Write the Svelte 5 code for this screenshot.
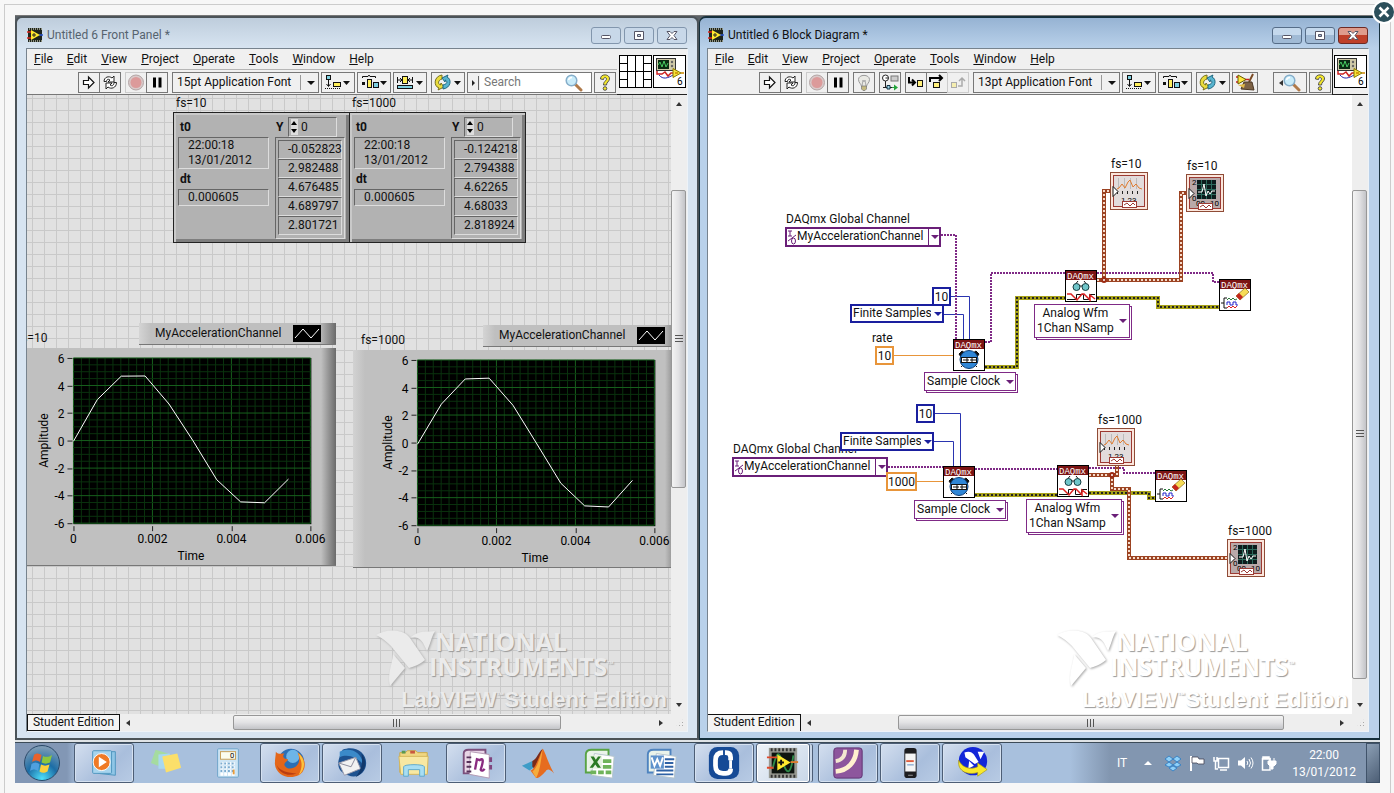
<script lang="ts">
    const menu = ['File', 'Edit', 'View', 'Project', 'Operate', 'Tools', 'Window', 'Help']

    const clusters = [
        { x: 146, label: 'fs=10', values: ['-0.052823', '2.982488', '4.676485', '4.689797', '2.801721'] },
        { x: 322, label: 'fs=1000', values: ['-0.124218', '2.794388', '4.62265', '4.68033', '2.818924'] }
    ]

    const charts = [
        { x: -18, y: 228, label: 'fs=10', samples: [-0.05, 2.98, 4.68, 4.69, 2.65, 0, -2.85, -4.45, -4.52, -2.8] },
        { x: 326, y: 230, label: 'fs=1000', samples: [-0.12, 2.79, 4.62, 4.68, 2.7, -0.1, -2.95, -4.6, -4.68, -2.75] }
    ]

    const plot = { x: 64, y: 36, w: 238, h: 166 }

    function px(i: number) {
        return plot.x + (i * 0.000605 / 0.006) * plot.w
    }
    function py(v: number) {
        return plot.y + ((6 - v) / 12) * plot.h
    }
    function trace(samples: number[]) {
        return samples.map((v, i) => px(i).toFixed(1) + ',' + py(v).toFixed(1)).join(' ')
    }
    function range(n: number) {
        return Array.from({ length: n }, (_, i) => i)
    }

    // block diagram, coordinates on the diagram canvas
    const notes = [
        { x: 78, y: 117, text: 'DAQmx Global Channel' },
        { x: 164, y: 236, text: 'rate' },
        { x: 403, y: 62, text: 'fs=10' },
        { x: 479, y: 64, text: 'fs=10' },
        { x: 25, y: 347, text: 'DAQmx Global Channel' },
        { x: 390, y: 318, text: 'fs=1000' },
        { x: 520, y: 429, text: 'fs=1000' }
    ]
    const channels = [{ x: 77, y: 132 }, { x: 24, y: 362 }]
    const rings = [{ x: 142, y: 209 }, { x: 132, y: 337 }]
    const constants = [
        { x: 224, y: 192, w: 19, value: '10', kind: 'int', name: 'samples per channel' },
        { x: 167, y: 251, w: 19, value: '10', kind: 'dbl', name: 'rate' },
        { x: 208, y: 309, w: 19, value: '10', kind: 'int', name: 'samples per channel' },
        { x: 178, y: 377, w: 31, value: '1000', kind: 'dbl', name: 'rate' }
    ]
    const nodes = [
        { x: 245, y: 244, kind: 'clock' },
        { x: 357, y: 175, kind: 'read' },
        { x: 511, y: 184, kind: 'clear' },
        { x: 235, y: 371, kind: 'clock' },
        { x: 349, y: 370, kind: 'read' },
        { x: 447, y: 375, kind: 'clear' }
    ]
    const selectors = [
        { x: 216, y: 277, lines: ['Sample Clock'] },
        { x: 326, y: 209, lines: ['Analog Wfm', '1Chan NSamp'] },
        { x: 206, y: 405, lines: ['Sample Clock'] },
        { x: 318, y: 404, lines: ['Analog Wfm', '1Chan NSamp'] }
    ]
    const terminals = [
        { x: 402, y: 77, kind: 'wave' },
        { x: 478, y: 79, kind: 'graph' },
        { x: 389, y: 333, kind: 'wave' },
        { x: 519, y: 444, kind: 'graph' }
    ]
    const wires = [
        { kind: 'int', d: 'M243 201.5H261.5V244M236 219.5H255.5V244M227 318.5H252.5V371M226 346.5H245.5V371' },
        { kind: 'dbl', d: 'M186 260.5H245M209 386.5H235' },
        { kind: 'task', d: 'M233 140H248V244M277 247H283V178H357M389 178H505V187H511M180 372H235M267 374H349M381 373H416V378H447' },
        { kind: 'error', d: 'M277 272H309V203H357M389 203H450V212H511M267 400H349M381 398H441V403H447' },
        { kind: 'wave', d: 'M389 185H473V98H478M396 185V96H402M381 380H409V371M404 380V394H421V463H519' }
    ]

    const pinned = [
        { icon: 'media', name: 'Windows Media Player', open: true },
        { icon: 'notes', name: 'Sticky Notes' },
        { icon: 'calc', name: 'Calculator' },
        { icon: 'firefox', name: 'Firefox', open: true },
        { icon: 'thunderbird', name: 'Thunderbird', open: true },
        { icon: 'explorer', name: 'Explorer' },
        { icon: 'onenote', name: 'OneNote', open: true },
        { icon: 'matlab', name: 'MATLAB' },
        { icon: 'excel', name: 'Excel' },
        { icon: 'word', name: 'Word' },
        { icon: 'ccleaner', name: 'C', open: true },
        { icon: 'labview', name: 'LabVIEW', open: true, stacked: true },
        { icon: 'waves', name: 'Connect', open: true },
        { icon: 'phone', name: 'Phone', open: true },
        { icon: 'nimax', name: 'Measurement & Automation', open: true }
    ]
</script>

{#snippet tool(name)}
    <svg class="glyph" class:wide={['align', 'distribute', 'resize', 'reorder'].includes(name)} viewBox={['align', 'distribute', 'resize', 'reorder'].includes(name) ? '0 0 30 19' : '0 0 20 19'}>
        {#if name === 'run'}
            <path d="M4.5 7.5H9.5V4L15 9.500L9.500 15V11.500H4.500Z" fill="#fff" stroke="#111" stroke-width="1.200" />
        {:else if name === 'loop'}
            <path d="M4 8.500C4 4 9 2.500 12 5L14 3V9H8L10 7C8 5.500 6.500 6.500 6.500 8.500ZM16.500 9.500C16.500 15 11 16.500 8 14L6 16V10H12L10 12C12 13.500 14 12.500 14 9.500Z" fill="#fff" stroke="#222" />
        {:else if name === 'stop'}
            <circle cx="10" cy="9.500" r="7.500" fill="#d9c9c9" stroke="#b3a5a5" />
            <circle cx="10" cy="9.500" r="5.500" fill="#dc9a9a" />
        {:else if name === 'pause'}
            <path d="M6 4.500H9V14.500H6ZM11.500 4.500H14.500V14.500H11.500Z" fill="#000" />
        {:else if name === 'bulb'}
            <path d="M7.500 13.500C7.500 11 4.500 10 4.500 6.500C4.500 1 15.500 1 15.500 6.500C15.500 10 12.500 11 12.500 13.500Z" fill="#e9e9e4" stroke="#999" />
            <path d="M8 13L9 7L10 9L11 7L12 13" fill="none" stroke="#aaa" />
            <path d="M7.500 13H12.500V16L11 17.500H9L7.500 16Z" fill="#c5ba80" stroke="#777" stroke-width=".7" />
        {:else if name === 'retain'}
            <circle cx="5.500" cy="5" r="3" fill="#fff" stroke="#222" />
            <path d="M5.500 8V14M5.500 5H8M3 14.500H7M9 14.500H14" stroke="#222" fill="none" />
            <rect x="11" y="3" width="7" height="5" fill="#ccc" stroke="#777" />
            <path d="M7 12.500H10V16H7Z" fill="#9ed4e8" stroke="#134" />
            <path d="M12 14H14V11.500L18 14.500L14 17.500V15H12Z" fill="#22a33a" />
        {:else if name === 'into'}
            <path d="M3 4V9.500H9M6 6.500L9 9.500L6 12.500" fill="none" stroke="#000" stroke-width="2" />
            <rect x="11.500" y="7.500" width="5" height="6" fill="#ffef7a" stroke="#111" />
        {:else if name === 'over'}
            <path d="M3 9V5H14M12 2L15 5L12 8" fill="none" stroke="#000" stroke-width="2" />
            <rect x="6.500" y="9.500" width="6" height="5" fill="#ffef7a" stroke="#111" />
        {:else if name === 'out'}
            <rect x="3.500" y="9.500" width="5" height="5" fill="#f5eeb0" stroke="#aaa" />
            <path d="M10 13H14V6M11 8L14 5L17 8" fill="none" stroke="#aaa" stroke-width="1.500" />
        {:else if name === 'align'}
            <rect x="3.500" y="2.500" width="4" height="4" fill="#7fd0e0" stroke="#111" />
            <path d="M5.500 7V13M3.500 11L5.500 13.500L7.500 11" fill="none" stroke="#111" />
            <path d="M2 15.500H18" stroke="#111" stroke-dasharray="1 1" />
            <rect x="10.500" y="9.500" width="7" height="4" fill="#ffef5a" stroke="#111" />
            <path d="M20 8H27L23.500 12Z" fill="#111" />
        {:else if name === 'distribute'}
            <path d="M3.500 5V3.500H9L10 2L11 3.500H16.500V5" fill="none" stroke="#111" />
            <path d="M3 9H6V12H3Z" fill="#111" />
            <rect x="8.500" y="6.500" width="4" height="8" fill="#ffef5a" stroke="#111" />
            <rect x="14.500" y="9.500" width="5" height="5" fill="#7fd0e0" stroke="#111" />
            <path d="M21 8H28L24.500 12Z" fill="#111" />
        {:else if name === 'resize'}
            <rect x="7.500" y="3.500" width="5" height="7" fill="#ffef5a" stroke="#111" />
            <path d="M2 7H7M13 7H18M5 5L7 7L5 9M15 5L13 7L15 9M2.500 4V10M17.500 4V10" fill="none" stroke="#111" />
            <rect x="2.500" y="12.500" width="15" height="3" fill="#7fd0e0" stroke="#111" />
            <path d="M21 8H28L24.500 12Z" fill="#111" />
        {:else if name === 'reorder'}
            <path d="M9 2C1 3 0 13 6 15L5 17L11 14L8 10L7.500 12C4.500 11 5 7 9 6Z" fill="#e9dc3c" stroke="#77701c" />
            <path d="M10 16C18 15 19 6 14 4L15 2L9 5L12 9L12.500 7C15 9 14 11 10 12Z" fill="#58b5d0" stroke="#1e6780" />
            <path d="M21 8H28L24.500 12Z" fill="#111" />
        {:else if name === 'clean'}
            <path d="M1 4H4M1 9H4M10 6.500H14" stroke="#c22" stroke-width="1.500" />
            <path d="M3 2L11 6.500L3 11Z" fill="#ffe83c" stroke="#665a00" />
            <path d="M18 1L14 9" stroke="#7a4a24" stroke-width="2" />
            <path d="M9 9L17 9L19 17L6 16Z" fill="#7d6245" stroke="#4c3826" />
            <path d="M3 12L10 11L9 15Z" fill="#e3ba48" />
        {:else if name === 'help'}
            <path d="M5.500 6C5.500 0 15 1 14.500 6C14 9 11.500 9 11.500 12H8.500C8.500 8 11.500 8 11.500 6C11.500 4 8.500 4 8.500 6.500Z" fill="#f5e82a" stroke="#444" stroke-width=".9" />
            <circle cx="10" cy="15.500" r="1.800" fill="#f5e82a" stroke="#444" stroke-width=".9" />
        {/if}
    </svg>
{/snippet}

{#snippet lens()}
    <svg class="lens" viewBox="0 0 18 18">
        <path d="M10 10L16 16" stroke="#b07a4a" stroke-width="3" stroke-linecap="round" />
        <circle cx="6.500" cy="6.500" r="5.300" fill="#c9ecfa" stroke="#86aeca" stroke-width="1.500" />
        <path d="M3.500 6C4 4 5 3.500 7 3.500" stroke="#fff" stroke-width="1.500" fill="none" />
    </svg>
{/snippet}

{#snippet group(names, labels, faint = '')}
    <div class="group">
        {#each names as name, i}
            <button class="tool" class:faint={faint === name} aria-label={labels[i]}>{@render tool(name)}</button>
        {/each}
    </div>
{/snippet}

{#snippet viIcon()}
    <svg class="vi-icon" viewBox="0 0 33 33">
        <rect x=".5" y=".5" width="32" height="32" fill="#fff" stroke="#000" />
        <rect x="3.500" y="3.500" width="19" height="12" fill="#cfc9a8" stroke="#333" />
        <rect x="5" y="5" width="11" height="9" fill="#0a2a12" />
        <path d="M5 10L7 7L9 12L11 6L13 12L15 8" stroke="#46c860" fill="none" />
        <circle cx="19" cy="7" r="1.200" fill="#666" />
        <circle cx="19" cy="11" r="1.200" fill="#666" />
        <path d="M4 16V19H9L12 17L15 21L18 18H20" fill="none" stroke="#c22" stroke-width="1.500" />
        <path d="M6 20C10 25 15 23 20 20" fill="none" stroke="#22a" />
        <path d="M20 13.500L28 18L20 22.500Z" fill="#f4e23a" stroke="#8a7a00" />
        <path d="M22 18H25M28 18H31" stroke="#c80" stroke-width="1.500" />
        <text x="24" y="30">6</text>
    </svg>
{/snippet}

{#snippet appIcon()}
    <svg class="app-icon" viewBox="0 0 16 16">
        <path d="M1 1H15V15H1Z" fill="#1d241d" />
        <path d="M2 2H15M2 14H15" stroke="#b5b5a0" stroke-width="1.500" stroke-dasharray="1 1" />
        <path d="M0 5H5M0 11H5" stroke="#d8261c" stroke-width="1.500" />
        <path d="M12 8H16" stroke="#2750d0" stroke-width="1.500" />
        <path d="M4 3L13 8L4 13Z" fill="#ffe92e" />
        <path d="M5 8H9M7 6V10" stroke="#222" />
    </svg>
{/snippet}

{#snippet titlebar(title)}
    <div class="titlebar">
        {@render appIcon()}
        <h1>{title}</h1>
        <button class="caption" aria-label="Minimize"><svg viewBox="0 0 12 12"><rect x="1.500" y="6.500" width="9" height="3" rx="1" fill="#fff" stroke="#556" /></svg></button>
        <button class="caption" aria-label="Restore"><svg viewBox="0 0 12 12"><path d="M1.500 2.500H10.500V10.500H1.500ZM4.500 5.500V7.500H7.500V5.500Z" fill="#fff" fill-rule="evenodd" stroke="#556" /></svg></button>
        <button class="caption close" aria-label="Close"><svg viewBox="0 0 12 12"><path d="M1 2.500H4L6 4.500L8 2.500H11L8 6.500L11 10.500H8L6 8.500L4 10.500H1L4 6.500Z" fill="#fff" stroke="#556" /></svg></button>
    </div>
{/snippet}

{#snippet menubar()}
    <nav class="menubar">
        {#each menu as item}
            <button><u>{item[0]}</u>{item.slice(1)}</button>
        {/each}
    </nav>
{/snippet}

{#snippet watermark()}
    <div class="watermark">
        <svg viewBox="0 0 62 60">
            <path d="M1 6C10 0 28 -1 35 9L50 31C44 36 38 38 34 39L20 22C15 15 9 10 1 6Z" />
            <path d="M18 25L30 39L15 57C12 45 17 37 18 25Z" />
            <path d="M36 8C44 1 52 3 60 2C56 9 55 16 52 22C48 14 47 8 36 8Z" />
        </svg>
        <p class="ni national">NATIONAL</p>
        <p class="ni">INSTRUMENTS<sup>™</sup></p>
        <p class="edition">LabVIEW<sup>™</sup>Student Edition</p>
    </div>
{/snippet}

{#snippet vscroll(start, size)}
    <div class="vscroll">
        <span class="arrow up"></span>
        <div class="track"><div class="thumb" style="top: {start}%; height: {size}%"><i></i></div></div>
        <span class="arrow down"></span>
    </div>
{/snippet}

{#snippet status(start, size)}
    <div class="status">
        <span class="edition-tag">Student Edition</span>
        <span class="arrow left"></span>
        <div class="track"><div class="thumb" style="left: {start}%; width: {size}%"><i></i></div></div>
        <span class="arrow right"></span>
        <span class="grip"></span>
    </div>
{/snippet}

{#snippet daqmx(kind)}
    <svg viewBox="0 0 32 32">
        <rect x=".5" y=".5" width="31" height="31" fill="#fff" stroke="#000" />
        <rect x="1" y="1" width="30" height="9" fill="#7c1414" />
        <text x="2" y="9">DAQmx</text>
        {#if kind === 'clock'}
            <path d="M6 15L9 12L12 14L8 18ZM26 15L23 12L20 14L24 18ZM8 28L10 26M24 28L22 26" fill="#111" stroke="#111" />
            <circle cx="16" cy="20.500" r="9" fill="#2f86d6" stroke="#0b3c74" />
            <rect x="8.500" y="18.500" width="15" height="5" fill="#fff" stroke="#111" />
            <path d="M11 20V22M13 20H15V22H13ZM18 20H20V22H18ZM22 20V22" stroke="#111" fill="none" />
        {:else if kind === 'read'}
            <path d="M9 16L13 11M23 16L19 11M15 16H17" stroke="#111" fill="none" />
            <circle cx="11.500" cy="17" r="3.500" fill="#6fc5c9" stroke="#153c40" />
            <circle cx="20.500" cy="17" r="3.500" fill="#6fc5c9" stroke="#153c40" />
            <path d="M2 29.500H11.500V24.500H18.500V29.500H24.500V24.500H30" stroke="#111" fill="none" />
            <path d="M2 24H6L12 30L17 24H19L25 30V25L30 29" stroke="#d22" stroke-width="1.500" fill="none" />
        {:else}
            <path d="M17 17L26 9L30 13L21 21Z" fill="#f6dc56" stroke="#8b6b1a" stroke-width=".7" />
            <path d="M17 17L20 14L24 18L21 21Z" fill="#c4261e" />
            <path d="M2 24H5M8 19H5V29H8" stroke="#111" fill="none" />
            <path d="M8 21L10 19L12 21L14 19L16 21L18 20" stroke="#2a7a3a" fill="none" />
            <path d="M8 26V23H11V26H14V23H17V26H19" stroke="#22c" fill="none" />
            <path d="M8 29L10 27L12 29L14 27L16 29L18 27" stroke="#d22" fill="none" />
        {/if}
    </svg>
{/snippet}

{#snippet terminal(kind)}
    <svg viewBox="0 0 38 38">
        <rect x=".5" y=".5" width="37" height="37" fill="#fbe6dc" stroke="#8f4b36" />
        <rect x="3.500" y="3.500" width="31" height="31" fill={kind === 'wave' ? '#e2dcdc' : '#b9a9a9'} stroke="#9c3a33" />
        {#if kind === 'wave'}
            <path d="M8.500 6V17M14.500 6V17M20.500 6V17M26.500 6V17" stroke="#bbb" />
            <path d="M7 17L9 16L12 12L15 16L18 10L20 8L23 15L26 12L29 16L32 17" stroke="#e07b2e" fill="none" />
            <path d="M7 20.500H32" stroke="#222" stroke-width="3" stroke-dasharray="1 4" />
            <text x="11" y="31">1.23</text>
        {:else}
            <rect x="11" y="6" width="19" height="19" fill="#0c1c1c" />
            <path d="M15.500 6V25M20.500 6V25M25.500 6V25M11 10.500H30M11 15.500H30M11 20.500H30" stroke="#2c6a5c" />
            <path d="M12 18H16L18 10L20 22L22 17L24 20L26 17H29" stroke="#fff" fill="none" />
            <text x="6" y="11">2</text>
            <text x="6" y="27">0</text>
            <text x="10" y="32">00</text>
            <text x="24" y="32">10</text>
        {/if}
        <rect x="12.500" y="29.500" width="14" height="6" fill="#fff" stroke="#9c3a33" />
        <path d="M14 33L17 31L20 34L23 31L25 33" stroke="#9c3a33" fill="none" />
        <path d="M3 14.500L8 19.500L3 24.500Z" fill="#fff" stroke="#111" />
    </svg>
{/snippet}

{#snippet program(name)}
    <svg class="program" viewBox="0 0 36 36">
        {#if name === 'media'}
            <path d="M12 6H30V31L12 29Z" fill="#8fc6e6" stroke="#4c94bd" />
            <rect x="6" y="5" width="20" height="24" rx="1" fill="#a6d4ee" stroke="#4c94bd" />
            <circle cx="15.500" cy="17" r="9" fill="#ef7a25" stroke="#fff" />
            <path d="M12.500 11.500L21 17L12.500 22.500Z" fill="#fff" />
        {:else if name === 'notes'}
            <path d="M7 4L20 8L15 23L2 18Z" fill="#a5dba0" />
            <path d="M10 9L22 8L24 24L10 24Z" fill="#a8d8f0" />
            <path d="M14 11L30 8L34 23L18 28Z" fill="#fbdf6a" />
        {:else if name === 'calc'}
            <rect x="7" y="3" width="22" height="30" rx="1" fill="#cde5f5" stroke="#6ba1c8" />
            <rect x="10" y="6" width="16" height="8" fill="#fbfdf0" stroke="#c79c50" />
            <text x="20" y="13">0</text>
            <path d="M10 18.500H26M10 22.500H26M10 26.500H26M10 30H26" stroke="#fff" stroke-width="3" stroke-dasharray="3 1" />
            <path d="M10 18.500H26M10 22.500H26M10 26.500H26" stroke="#7cacd0" stroke-width="2" stroke-dasharray="2 2" />
            <path d="M24 25V30" stroke="#e79b3a" stroke-width="2" />
        {:else if name === 'firefox'}
            <circle cx="19" cy="17" r="14" fill="#2c6fb5" />
            <circle cx="21" cy="11" r="7" fill="#6db5e8" />
            <path d="M3 6C5 9 9 8 12 8C9 12 12 14 16 14C15 17 12 17 12 20C14 25 21 25 25 21C29 17 28 11 26 7C36 13 36 26 27 31C17 36 3 31 2 19C2 13 3 10 3 6Z" fill="#e4661a" />
            <path d="M26 7C35 13 35 25 27 31C32 22 30 16 29 14C28 12 28 9 26 7Z" fill="#fbc23c" />
            <path d="M4 20C6 28 15 33 25 29C17 28 7 27 4 20Z" fill="#b83d12" />
        {:else if name === 'thunderbird'}
            <path d="M8 4C20 -1 33 6 33 18C33 29 23 35 14 31C5 28 1 22 5 11Z" fill="#1d5290" />
            <path d="M5 6C15 1 28 5 30 20C24 12 13 8 5 12Z" fill="#3b8ac9" />
            <path d="M4 18L22 12L27 24L10 31Z" fill="#f2f2f2" stroke="#99a" />
            <path d="M4 18L17 22L22 12" fill="none" stroke="#889" />
            <path d="M28 8C35 16 33 27 22 33C30 22 29 15 28 8Z" fill="#12396c" />
        {:else if name === 'explorer'}
            <path d="M3 7H9L11 5H20L22 7H32V28H3Z" fill="#f0d782" stroke="#c9a848" />
            <path d="M5 5H9V8H5Z" fill="#5b9a50" />
            <path d="M14 5H19V8H14Z" fill="#c9583f" />
            <path d="M2 11H33L32 30H4Z" fill="#f8e8a2" stroke="#d4b65a" />
            <path d="M7 32V22C7 19 29 19 29 22V32H24V25H12V32Z" fill="#a8def2" stroke="#5ba8cc" />
        {:else if name === 'onenote'}
            <path d="M5 8Q5 4 10 4H28V29H5Z" fill="#e8d5e6" stroke="#7b4f7c" stroke-width="2" />
            <path d="M12 6L32 9V34L11 30Z" fill="#fff" stroke="#b49ab4" />
            <path d="M8 12H13M8 17H13M8 22H13M8 27H13" stroke="#56305a" stroke-width="2" />
            <path d="M17 25L19 14L22 15C26 12 26 16 23 25C24 27 26 26 27 24" stroke="#8a2b80" stroke-width="2.500" fill="none" />
            <path d="M32 12H35V17H32ZM32 20H35V25H32Z" fill="#80457e" />
        {:else if name === 'matlab'}
            <path d="M1 21L12 16L17 20L9 26Z" fill="#3e9cc7" />
            <path d="M12 16C17 14 18 7 23 3L17 26L12 22Z" fill="#7a2b1a" />
            <path d="M23 3C26 7 29 19 35 29C30 24 28 24 26 27C23 30 20 34 16 34L10 26C15 25 19 11 23 3Z" fill="#e66c1f" />
            <path d="M23 3C21 16 20 27 16 34L12 27C17 24 20 12 23 3Z" fill="#f5ac3c" />
        {:else if name === 'excel' || name === 'word'}
            <path d="M3 9Q3 4 9 4H27V28H3Z" fill="#eaf3ea" stroke={name === 'excel' ? '#58a344' : '#4e83bf'} stroke-width="2" />
            <path d="M12 8L33 11L31 34L9 31Z" fill="#fff" stroke="#b5c5cc" />
            {#if name === 'excel'}
                <path d="M6 10H20V24H6Z" fill="#e5f2e0" />
                <path d="M8 11H11.500L13.500 14.500L16 11H19L15 17L19 23H15.500L13 19.500L10.500 23H7L11.500 17Z" fill="#2b7a25" />
                <path d="M21 14H30V18H21ZM21 20H30V24H21ZM8 26H14V30H8ZM16 26H22V30H16ZM24 26H30V30H24Z" fill="#6fb35a" />
            {:else}
                <path d="M6 10H20V24H6Z" fill="#5e92cc" />
                <path d="M7 12L10 21L13 14L16 21L19 12" stroke="#fff" stroke-width="2" fill="none" />
                <path d="M21 14H31M21 18H30M21 22H30M12 26H30M12 30H30" stroke="#2f62a5" stroke-width="2" />
            {/if}
        {:else if name === 'ccleaner'}
            <rect x="2" y="1" width="32" height="34" rx="9" fill="#164a96" />
            <path d="M25 24V25Q25 29 20 29H17Q9 29 9 21V15Q9 7 17 7H20Q25 7 25 12V15" fill="none" stroke="#fff" stroke-width="5" />
            <path d="M18 4V11" stroke="#164a96" stroke-width="2" />
            <path d="M25 15V24" stroke="#fff" stroke-width="3" />
        {:else if name === 'labview'}
            <rect x="3" y="2" width="30" height="32" fill="#989a92" />
            <path d="M5 4H32M5 32H32" stroke="#333" stroke-width="3" stroke-dasharray="2 2" />
            <rect x="6" y="7" width="24" height="22" fill="#0d140f" />
            <path d="M7 24C12 3 14 6 18 18S26 32 29 10" stroke="#2f8b4a" stroke-width="2" fill="none" />
            <path d="M1 12H12M1 23H8" stroke="#e0492c" stroke-width="2" />
            <path d="M26 17H34" stroke="#dd7b2e" stroke-width="2" />
            <path d="M12 9L26 17.500L12 26Z" fill="#ffe92e" />
            <path d="M13 17.500H19M16 14.500V20.500" stroke="#111" stroke-width="2" />
        {:else if name === 'waves'}
            <rect x="3" y="2" width="30" height="32" rx="3" fill="#8d569d" stroke="#5e3170" />
            <path d="M5 16C12 15 15 11 15 4" stroke="#f3e7d0" stroke-width="4" fill="none" />
            <path d="M5 27C18 26 26 17 27 4" stroke="#fff1cf" stroke-width="5" fill="none" />
        {:else if name === 'phone'}
            <rect x="12" y="2" width="13" height="32" rx="3" fill="#1d1d20" />
            <rect x="13" y="8" width="11" height="19" fill="#f5f5f5" />
            <path d="M14 16H22" stroke="#e05c3c" stroke-width="2" />
            <path d="M15 20H22" stroke="#5a8bc0" />
            <path d="M16 31H21" stroke="#999" />
        {:else}
            <circle cx="19" cy="16" r="15" fill="#1326d8" />
            <path d="M10 7C14 5 18 6 20 9L25 17L21 19L11 12ZM24 6L31 6L27 14ZM15 16L20 21L14 24Z" fill="#fff" />
            <path d="M4 15C2 28 15 31 24 28V32L34 25L24 18V22C15 26 7 22 4 15Z" fill="#f9e92c" stroke="#a89a10" stroke-width=".7" />
        {/if}
    </svg>
{/snippet}

<div class="page">
    <div class="viewer">
        <div class="desktop">
            <div class="windows">
                <section class="window inactive">
                    {@render titlebar('Untitled 6 Front Panel *')}
                    <div class="client">
                        <header>
                            <div class="bars">
                                {@render menubar()}
                                <div class="toolbar">
                                    {@render group(['run', 'loop'], ['Run', 'Run continuously'])}
                                    {@render group(['stop', 'pause'], ['Abort', 'Pause'], 'stop')}
                                    <div class="group font"><select aria-label="Font"><option>15pt Application Font</option></select><span class="caret"></span></div>
                                    <button class="tool" aria-label="Align objects">{@render tool('align')}</button>
                                    <button class="tool" aria-label="Distribute objects">{@render tool('distribute')}</button>
                                    <button class="tool" aria-label="Resize objects">{@render tool('resize')}</button>
                                    {@render group(['reorder'], ['Reorder'])}
                                    <label class="search">
                                        <span class="handle"></span>
                                        <input type="text" placeholder="Search" aria-label="Search" />
                                        {@render lens()}
                                    </label>
                                    <button class="tool" aria-label="Context help">{@render tool('help')}</button>
                                </div>
                            </div>
                            <div class="icons">
                                <svg class="vi-icon" viewBox="0 0 33 33">
                                    <rect x=".5" y=".5" width="32" height="32" fill="#fff" stroke="#000" />
                                    <path d="M8.500 0V33M16.500 0V33M24.500 0V33M8 16.500H25M0 8.500H8M0 16.500H8M0 24.500H8M25 8.500H33M25 16.500H33M25 24.500H33" stroke="#000" />
                                </svg>
                                {@render viIcon()}
                            </div>
                        </header>
                        <div class="body">
                            <div class="canvas panel">
                                {#each clusters as cluster}
                                    <div class="cluster" style="left: {cluster.x}px">
                                        <p>{cluster.label}</p>
                                        <div class="frame">
                                            <div class="stamp">
                                                <b>t0</b>
                                                <output>22:00:18<br />13/01/2012</output>
                                                <b>dt</b>
                                                <output>0.000605</output>
                                            </div>
                                            <div class="samples">
                                                <label><b>Y</b><span class="index"><i class="spin"></i><input value="0" /></span></label>
                                                <ol>
                                                    {#each cluster.values as value}
                                                        <li>{value}</li>
                                                    {/each}
                                                </ol>
                                            </div>
                                        </div>
                                    </div>
                                {/each}
                                {#each charts as chart}
                                    <div class="chart" style="left: {chart.x}px; top: {chart.y}px">
                                        <div class="chart-head">
                                            <span>{chart.label}</span>
                                            <div class="legend">
                                                MyAccelerationChannel
                                                <svg viewBox="0 0 28 17"><rect width="28" height="17" fill="#000" /><path d="M2 13L10 4L18 13L26 4" stroke="#fff" fill="none" /></svg>
                                            </div>
                                        </div>
                                        <svg class="graph" viewBox="0 26 327 218">
                                            <rect x={plot.x} y={plot.y} width={plot.w + 1} height={plot.h + 1} fill="#000" />
                                            {#each range(31) as i}
                                                <line class:major={i % 10 === 0} x1={plot.x + i * plot.w / 30} x2={plot.x + i * plot.w / 30} y1={plot.y} y2={plot.y + plot.h} />
                                            {/each}
                                            {#each range(25) as i}
                                                <line class:major={i % 4 === 0} y1={plot.y + i * plot.h / 24} y2={plot.y + i * plot.h / 24} x1={plot.x} x2={plot.x + plot.w} />
                                            {/each}
                                            <polyline points={trace(chart.samples)} />
                                            {#each [6, 4, 2, 0, -2, -4, -6] as v}
                                                <path class="tick" d="M58 {Math.round(py(v)) + 0.5}h5" />
                                                <text text-anchor="end" x="55" y={Math.round(py(v)) + 5}>{v}</text>
                                            {/each}
                                            {#each ['0', '0.002', '0.004', '0.006'] as t, i}
                                                <path class="tick" d="M{Math.round(plot.x + i * plot.w / 3) + 0.5} 205v5" />
                                                <text text-anchor="middle" x={plot.x + i * plot.w / 3} y="222">{t}</text>
                                            {/each}
                                            <text text-anchor="middle" x="182" y="239">Time</text>
                                            <text text-anchor="middle" transform="translate(38 119) rotate(-90)">Amplitude</text>
                                        </svg>
                                    </div>
                                {/each}
                                {@render watermark()}
                            </div>
                            {@render vscroll(14, 50)}
                        </div>
                        {@render status(19, 63)}
                    </div>
                </section>

                <section class="window active">
                    {@render titlebar('Untitled 6 Block Diagram *')}
                    <div class="client">
                        <header>
                            <div class="bars">
                                {@render menubar()}
                                <div class="toolbar">
                                    {@render group(['run', 'loop'], ['Run', 'Run continuously'])}
                                    {@render group(['stop', 'pause'], ['Abort', 'Pause'], 'stop')}
                                    {@render group(['bulb'], ['Highlight execution'])}
                                    {@render group(['retain'], ['Retain wire values'])}
                                    {@render group(['into', 'over', 'out'], ['Step into', 'Step over', 'Step out'], 'out')}
                                    <div class="group font"><select aria-label="Font"><option>13pt Application Font</option></select><span class="caret"></span></div>
                                    <button class="tool" aria-label="Align objects">{@render tool('align')}</button>
                                    <button class="tool" aria-label="Distribute objects">{@render tool('distribute')}</button>
                                    {@render group(['reorder'], ['Reorder'])}
                                    <button class="tool clean" aria-label="Clean up diagram">{@render tool('clean')}</button>
                                    <button class="tool find" aria-label="Search"><span class="arrow left"></span>{@render lens()}</button>
                                    <button class="tool" aria-label="Context help">{@render tool('help')}</button>
                                </div>
                            </div>
                            <div class="icons">{@render viIcon()}</div>
                        </header>
                        <div class="body">
                            <div class="canvas diagram">
                                <svg class="wires">
                                    {#each wires as wire}
                                        <path class={wire.kind} d={wire.d} />
                                        {#if wire.kind === 'error' || wire.kind === 'wave'}
                                            <path class="{wire.kind} core" d={wire.d} />
                                        {/if}
                                    {/each}
                                    <circle cx="396" cy="185" r="2" />
                                    <circle cx="404" cy="380" r="2" />
                                </svg>
                                {#each notes as note}
                                    <span class="note" style="left: {note.x}px; top: {note.y}px">{note.text}</span>
                                {/each}
                                {#each channels as c}
                                    <div class="ring channel" style="left: {c.x}px; top: {c.y}px">
                                        <svg viewBox="0 0 10 16"><path d="M1 2H5M3 2V7M1 7H5M1 12L9 6" /><ellipse cx="6.500" cy="12" rx="2" ry="3" /></svg>
                                        <select aria-label="DAQmx Global Channel"><option>MyAccelerationChannel</option></select>
                                        <span class="caret"></span>
                                    </div>
                                {/each}
                                {#each rings as r}
                                    <div class="ring mode" style="left: {r.x}px; top: {r.y}px">
                                        <select aria-label="Sample mode"><option>Finite Samples</option></select>
                                        <span class="caret"></span>
                                    </div>
                                {/each}
                                {#each constants as c}
                                    <input class="constant {c.kind}" aria-label={c.name} value={c.value} style="left: {c.x}px; top: {c.y}px; width: {c.w}px" />
                                {/each}
                                {#each nodes as node}
                                    <div class="node" style="left: {node.x}px; top: {node.y}px">{@render daqmx(node.kind)}</div>
                                {/each}
                                {#each selectors as s}
                                    <button class="selector" style="left: {s.x}px; top: {s.y}px">
                                        <span>{#each s.lines as line}<span class="line">{line}</span>{/each}</span>
                                        <span class="caret"></span>
                                    </button>
                                {/each}
                                {#each terminals as t}
                                    <div class="terminal" style="left: {t.x}px; top: {t.y}px">{@render terminal(t.kind)}</div>
                                {/each}
                                {@render watermark()}
                            </div>
                            {@render vscroll(14, 82)}
                        </div>
                        {@render status(16, 74)}
                    </div>
                </section>
            </div>

            <footer class="taskbar">
                <button class="start" aria-label="Start">
                    <svg viewBox="0 0 38 38">
                        <defs>
                            <radialGradient id="orb" cx=".5" cy=".95" r=".9">
                                <stop offset="0" stop-color="#4fe0fb" />
                                <stop offset=".5" stop-color="#1c6da6" />
                                <stop offset="1" stop-color="#7d9bb5" />
                            </radialGradient>
                        </defs>
                        <circle cx="19" cy="19" r="17.500" fill="url(#orb)" stroke="#2b4a6a" />
                        <path d="M11 11C13 9 16 9 18.500 11L17 18C14 16 12 16 9 18Z" fill="#e8622c" />
                        <path d="M20 12C23 13.500 26 13 29 11L27 18.500C24 20 21 20 18.500 18.500Z" fill="#8cc63e" />
                        <path d="M8.500 20C11 18 14 18 16.500 20L15 27C12 25 10 25 7 27Z" fill="#4fa0de" />
                        <path d="M18 20.500C21 22 23 22 26.500 20.500L24.500 27.500C21 29.500 19 29 16.500 27.500Z" fill="#fbcf3b" />
                    </svg>
                </button>
                {#each pinned as app}
                    <button class="app" class:open={app.open} class:stacked={app.stacked} aria-label={app.name}>{@render program(app.icon)}</button>
                {/each}
                <div class="tray">
                    <span class="lang">IT</span>
                    <span class="arrow up light"></span>
                    <svg viewBox="0 0 18 18"><path d="M5 2L9 5L5 8L1 5ZM13 2L17 5L13 8L9 5ZM5 8L9 11L5 13L1 11ZM13 8L17 11L13 13L9 11ZM9 12L13 14L9 17L5 14Z" fill="#8fd0f8" stroke="#2a78c0" stroke-width=".8" /></svg>
                    <svg viewBox="0 0 18 18"><path d="M3 2V17" stroke="#fff" stroke-width="2" /><path d="M4 3H10L11 5H16V10H10L9 9H4Z" fill="#fff" stroke="#445" stroke-width=".8" /></svg>
                    <svg viewBox="0 0 18 18"><path d="M6.500 4.500H16.500V13.500H6.500ZM8 16H15M2 3V7H5V3M3.500 7V15H6" fill="none" stroke="#fff" stroke-width="1.500" /></svg>
                    <svg viewBox="0 0 18 18"><path d="M2 6.500H5L9 3V15L5 11.500H2Z" fill="#fff" /><path d="M11 7Q12.500 9 11 11M13 5Q16 9 13 13M15 3.500Q19 9 15 14.500" stroke="#fff" fill="none" /></svg>
                    <svg viewBox="0 0 18 18"><path d="M3 3H9V5H3ZM2.500 4.500H10V16H2.500Z" fill="none" stroke="#fff" stroke-width="1.500" /><path d="M8 7H16V10L14 12H13V15H11V12H10L8 10ZM10 4V7M14 4V7" fill="#fff" stroke="#fff" /></svg>
                    <time>22:00<br />13/01/2012</time>
                    <button class="show-desktop" aria-label="Show desktop"></button>
                </div>
            </footer>
        </div>
        <button class="dismiss" aria-label="Close picture">
            <svg viewBox="0 0 24 24"><circle cx="12" cy="12" r="11" fill="#2c4f5b" stroke="#fff" stroke-width="2" /><path d="M7.500 7.500L16.500 16.500M16.500 7.500L7.500 16.500" stroke="#fff" stroke-width="2.500" /></svg>
        </button>
    </div>
</div>

<style>
    :global(body) {
        background: #f7f7f7;
    }
    .page, .page * {
        box-sizing: border-box;
    }
    .page {
        height: 100vh;
        min-height: 640px;
        padding: 4px 3px 0 4px;
        overflow: hidden;
        color: #111;
        font: 12px/15px Roboto, "Open Sans", sans-serif;
    }
    button, input, select {
        margin: 0;
        padding: 0;
        border: 0;
        border-radius: 0;
        background: none;
        color: inherit;
        font: inherit;
        appearance: none;
    }
    p, h1, ol {
        margin: 0;
        padding: 0;
        list-style: none;
        font-weight: normal;
    }
    svg {
        display: block;
        flex: none;
    }
    .viewer {
        position: relative;
        height: 100%;
        padding: 10px;
        border: 1px solid #ccc;
        border-bottom: 0;
    }
    .desktop {
        display: flex;
        flex-direction: column;
        height: 100%;
        border-top: 1px solid #777;
        background: #dfe3e6;
    }
    .dismiss {
        position: absolute;
        top: -5px;
        right: -6px;
        width: 24px;
        height: 24px;
    }

    /* windows */
    .windows {
        display: grid;
        grid-template-columns: 684fr 681fr;
        flex: 1;
        min-height: 0;
        margin-bottom: 2px;
        background: #5c6368;
    }
    .window {
        display: flex;
        flex-direction: column;
        min-width: 0;
        min-height: 0;
        padding: 0 9px 6px;
        border: 2px solid #4b5358;
        border-radius: 7px 7px 0 0;
        background: linear-gradient(#becddc, #d7e4f1 30px, #d7e4f1);
    }
    .window.active {
        border-width: 2px 1px;
        padding: 0 10px 6px 7px;
        border-color: #16303c;
        background: linear-gradient(#96b3d3, #b9d1ea 30px, #b9d1ea);
    }
    .titlebar {
        display: flex;
        align-items: center;
        gap: 3px;
        height: 30px;
        padding: 4px 1px 0 1px;
    }
    .inactive .titlebar {
        color: #56636f;
    }
    .app-icon {
        width: 16px;
        height: 16px;
    }
    h1 {
        flex: 1;
        padding-left: 1px;
        font-size: 12px;
    }
    .caption {
        display: flex;
        align-items: center;
        justify-content: center;
        width: 30px;
        height: 17px;
        border: 1px solid #8296ad;
        border-radius: 3px;
        background: #c8d8e9;
    }
    .active .caption {
        border-color: #566d88;
        background: linear-gradient(#c4d8ec 50%, #a0bad5 50%);
    }
    .active .close {
        border-color: #6e2a24;
        background: linear-gradient(#df9c8c 50%, #bf4029 50%);
    }
    .caption svg {
        width: 12px;
        height: 12px;
    }
    .client {
        display: flex;
        flex-direction: column;
        flex: 1;
        min-height: 0;
        border: 1px solid #77838e;
        border-right-color: #eef3f8;
        border-bottom-color: #eef3f8;
        background: #f0f0f0;
    }
    header {
        display: flex;
    }
    .bars {
        flex: 1;
        min-width: 0;
    }
    .menubar {
        display: flex;
        gap: 14px;
        height: 21px;
        padding: 0 7px;
        border-bottom: 1px solid #b5b5b5;
    }
    .menubar button {
        line-height: 18px;
    }
    .toolbar {
        display: flex;
        gap: 2px;
        height: 25px;
        padding: 2px 1px 0 49px;
        border-bottom: 1px solid #777;
    }
    .group {
        display: flex;
        margin-left: 2px;
    }
    .tool {
        display: flex;
        align-items: center;
        height: 21px;
        border: 1px solid #777;
    }
    .group .tool + .tool {
        margin-left: -1px;
    }
    .tool.faint {
        border-color: #ccc;
    }
    .glyph {
        width: 20px;
        height: 19px;
    }
    .glyph.wide {
        width: 32px;
    }
    .clean {
        padding: 0 2px;
    }
    .find {
        justify-content: center;
        width: 34px;
        margin-left: auto;
    }
    .lens {
        width: 18px;
        height: 18px;
    }
    .font {
        position: relative;
        height: 21px;
        border: 1px solid #777;
    }
    .font select {
        width: 145px;
        padding: 0 0 1px 4px;
    }
    .font .caret {
        position: absolute;
        top: 2px;
        right: 0;
        width: 18px;
        height: 15px;
        border-left: 1px solid #999;
    }
    .caret::after {
        content: '';
        position: absolute;
        top: 50%;
        left: 50%;
        margin: -2px 0 0 -3px;
        border: 4px solid transparent;
        border-top-color: currentColor;
        border-bottom: 0;
    }
    .search {
        display: flex;
        align-items: center;
        flex: 1;
        min-width: 0;
        height: 21px;
        padding-right: 8px;
        border: 1px solid #777;
        background: linear-gradient(90deg, #f0f0f0 12px, #fff 12px);
    }
    .search input {
        flex: 1;
        min-width: 0;
        padding-left: 5px;
    }
    .search input::placeholder {
        color: #777;
        opacity: 1;
    }
    .handle {
        width: 11px;
        height: 14px;
        border-right: 1px solid #666;
    }
    .handle::before {
        content: '';
        display: block;
        width: 0;
        margin: 4px 0 0 4px;
        border: 3px solid transparent;
        border-left-color: #222;
        border-right: 0;
    }
    .icons {
        display: flex;
        gap: 1px;
        padding: 6px 1px 0 2px;
        border-bottom: 1px solid #222;
    }
    .active .icons {
        border-left: 1px solid #222;
        padding-left: 1px;
    }
    .vi-icon {
        width: 33px;
        height: 33px;
    }
    .vi-icon text {
        font-size: 10px;
    }
    .body {
        display: flex;
        flex: 1;
        min-height: 0;
    }
    .canvas {
        position: relative;
        flex: 1;
        min-width: 0;
        overflow: hidden;
        background: #fff;
    }
    .panel {
        background:
            linear-gradient(#c9c9c9 1px, transparent 1px) 0 3px / 12px 12px,
            linear-gradient(90deg, #c9c9c9 1px, transparent 1px) 5px 0 / 12px 12px,
            #e1e1e1;
    }

    /* scrollbars */
    .vscroll {
        display: flex;
        flex-direction: column;
        align-items: center;
        width: 16px;
        padding: 7px 0;
        background: #eee;
    }
    .track {
        position: relative;
        flex: 1;
        align-self: stretch;
    }
    .thumb {
        position: absolute;
        display: flex;
        align-items: center;
        justify-content: center;
        border: 1px solid #979797;
        border-radius: 2px;
    }
    .vscroll .thumb {
        left: 0;
        width: 15px;
        background: linear-gradient(90deg, #f4f4f4, #e2e2e4 50%, #c3c4c8);
    }
    .status .thumb {
        top: 1px;
        height: 15px;
        background: linear-gradient(#f4f4f4, #e2e2e4 50%, #c3c4c8);
    }
    .thumb i {
        width: 8px;
        height: 8px;
        background: repeating-linear-gradient(90deg, #555 0 1px, transparent 1px 3px);
    }
    .vscroll .thumb i {
        background: repeating-linear-gradient(#555 0 1px, transparent 1px 3px);
    }
    .arrow {
        border: 3px solid transparent;
    }
    .arrow.up {
        border-top: 0;
        border-bottom: 4px solid #333;
    }
    .arrow.down {
        border-bottom: 0;
        border-top: 4px solid #333;
    }
    .arrow.left {
        border-left: 0;
        border-right: 4px solid #333;
    }
    .arrow.right {
        border-right: 0;
        border-left: 4px solid #333;
    }
    .status {
        display: flex;
        align-items: center;
        height: 17px;
        background: #eee;
    }
    .edition-tag {
        width: 93px;
        height: 17px;
        margin-right: 6px;
        border: 1px solid #111;
        background: #f4f4f4;
        text-align: center;
        line-height: 15px;
    }
    .active .edition-tag {
        border-width: 1px 1px 0 0;
    }
    .status .track {
        height: 17px;
        align-self: auto;
        margin: 0 4px;
    }
    .grip {
        width: 10px;
        height: 10px;
        margin: 0 2px 0 12px;
        background: radial-gradient(#aaa 1px, transparent 1px) 0 0 / 3px 3px;
        clip-path: polygon(100% 0, 100% 100%, 0 100%);
    }

    /* front panel */
    .cluster {
        position: absolute;
        top: 1px;
        width: 177px;
    }
    .cluster p {
        height: 16px;
        padding-left: 3px;
    }
    .frame {
        display: flex;
        gap: 6px;
        height: 131px;
        padding: 2px 2px 0;
        border: 1px solid #222;
        background: #b2b2b2;
        box-shadow: inset 2px 2px 0 #c9c9c9, inset -3px -3px 0 #7e7e7e;
    }
    .stamp {
        display: flex;
        flex-direction: column;
        flex: 1;
        padding: 5px 0 0 2px;
    }
    .stamp b {
        height: 17px;
        padding-left: 2px;
    }
    .stamp output {
        display: block;
        margin-bottom: 3px;
        padding: 0 9px;
    }
    output, .index, li {
        border: 1px solid #666;
        border-right-color: #ddd;
        border-bottom-color: #ddd;
    }
    .samples {
        width: 70px;
        margin-right: 2px;
        padding-top: 2px;
    }
    .samples label {
        display: flex;
        justify-content: space-between;
        align-items: center;
        height: 20px;
        padding: 0 8px 0 1px;
    }
    .index {
        display: flex;
        align-items: center;
        gap: 3px;
        width: 49px;
        height: 20px;
        padding-left: 2px;
    }
    .index input {
        width: 24px;
    }
    .spin {
        position: relative;
        width: 7px;
        height: 16px;
        background: #ddd;
    }
    .spin::before, .spin::after {
        content: '';
        position: absolute;
        top: 2px;
        left: 0;
        border: 3px solid transparent;
        border-top: 0;
        border-bottom: 4px solid #000;
    }
    .spin::after {
        top: 10px;
        border-top: 4px solid #000;
        border-bottom: 0;
    }
    ol {
        padding: 2px 2px 3px;
        border: 1px solid #666;
        border-right-color: #ddd;
        border-bottom-color: #ddd;
    }
    li {
        height: 19px;
        padding-left: 9px;
        line-height: 17px;
    }
    .chart {
        position: absolute;
        width: 327px;
    }
    .chart-head {
        display: flex;
        justify-content: space-between;
        height: 25px;
        padding-left: 8px;
    }
    .chart-head > span {
        padding-top: 8px;
    }
    .legend {
        display: flex;
        align-items: center;
        justify-content: space-between;
        width: 197px;
        height: 22px;
        padding: 0 15px 0 16px;
        background: linear-gradient(90deg, #d4d4d4, #bfbfbf 12px, #bfbfbf 180px, #6a6a6a);
        border-bottom: 1px solid #777;
    }
    .legend svg {
        width: 28px;
        height: 17px;
    }
    .graph {
        width: 327px;
        height: 218px;
        border-bottom: 1px solid #777;
        background: linear-gradient(90deg, #d2d2d2, #c0c0c0 12px, #c0c0c0 312px, #6a6a6a);
    }
    .graph line {
        stroke: #0a320e;
        stroke-width: 1;
    }
    .graph .major {
        stroke: #17611d;
    }
    .graph polyline {
        fill: none;
        stroke: #fff;
        stroke-width: 1;
    }
    .tick {
        stroke: #222;
    }
    .watermark {
        position: absolute;
        right: 4px;
        bottom: 1px;
        width: 292px;
        height: 84px;
        color: #ebebeb;
        text-shadow: 1px 1px 1px #999;
    }
    .diagram .watermark {
        color: #fff;
    }
    .watermark svg {
        position: absolute;
        top: 0;
        left: 0;
        width: 62px;
        height: 60px;
        fill: currentColor;
        filter: drop-shadow(1px 1px 1px #aaa);
    }
    .ni {
        padding-left: 54px;
        font: bold 25px/25px "Open Sans", sans-serif;
    }
    .national {
        padding-left: 60px;
    }
    .edition {
        padding-top: 9px;
        text-align: right;
        font: bold 22px/24px "Liberation Sans", sans-serif;
    }
    .watermark sup {
        font-size: 8px;
        line-height: 8px;
        vertical-align: 9px;
    }

    /* block diagram */
    .canvas > .note, .ring, .constant, .node, .selector, .terminal {
        position: absolute;
    }
    .wires {
        position: absolute;
        width: 100%;
        height: 100%;
        fill: none;
    }
    .wires .int {
        stroke: #2a35b0;
    }
    .wires .dbl {
        stroke: #e8953a;
    }
    .wires .task {
        stroke: #7f2a86;
        stroke-width: 2;
        stroke-dasharray: 2 1;
    }
    .wires .error {
        stroke: #a8a21a;
        stroke-width: 4;
    }
    .wires .error.core {
        stroke: #222;
        stroke-width: 2;
        stroke-dasharray: 2 2;
    }
    .wires .wave {
        stroke: #9c4322;
        stroke-width: 4;
    }
    .wires .wave.core {
        stroke: #f7dccb;
        stroke-width: 2;
        stroke-dasharray: 2 2;
    }
    .wires circle {
        stroke: #9c2a12;
        stroke-width: 2;
        fill: #fff;
    }
    .ring {
        display: flex;
        border: 2px solid #6a1f78;
        background: #fff;
    }
    .channel {
        width: 156px;
        height: 20px;
    }
    .channel svg {
        width: 10px;
        height: 16px;
        fill: none;
        stroke: #6a1f78;
    }
    .ring select {
        flex: 1;
        min-width: 0;
        padding-bottom: 1px;
    }
    .ring .caret {
        position: relative;
        width: 11px;
        color: #6a1f78;
    }
    .channel .caret {
        border-left: 1px solid #6a1f78;
    }
    .mode {
        width: 94px;
        height: 19px;
        border-color: #1a1f9e;
    }
    .mode select {
        padding-left: 1px;
    }
    .mode .caret {
        color: #1a1f9e;
    }
    .constant {
        height: 19px;
        border: 2px solid #1a1f9e;
        background: #fff;
        text-align: center;
    }
    .constant.dbl {
        border-color: #e8953a;
    }
    .node, .node svg {
        width: 32px;
        height: 32px;
    }
    .node text {
        fill: #fff;
        font: 9px "Liberation Mono", monospace;
    }
    .selector {
        display: flex;
        align-items: center;
        gap: 4px;
        padding: 1px 2px;
        border: 1px solid #7f2a86;
        background: #fff;
        box-shadow: 2px 2px 0 -1px #fff, 3px 3px 0 -1px #7f2a86, 2px 2px 0 #7f2a86;
        line-height: 15px;
    }
    .line {
        display: block;
    }
    .selector .caret {
        position: relative;
        width: 9px;
        height: 8px;
        color: #6a1f78;
    }
    .terminal, .terminal svg {
        width: 38px;
        height: 38px;
    }
    .terminal text {
        font-size: 8px;
    }

    /* taskbar */
    .taskbar {
        display: flex;
        gap: 2px;
        height: 41px;
        border-top: 1px solid #3c4b58;
        background: linear-gradient(90deg, #8297b5 52px, #a8c0dd 64px, #a8c0dd 1055px, #8296b0 1095px);
    }
    .start {
        width: 57px;
        padding-left: 8px;
    }
    .start svg {
        width: 38px;
        height: 38px;
    }
    .app {
        display: flex;
        align-items: center;
        justify-content: center;
        width: 60px;
        height: 40px;
        flex: none;
    }
    .open {
        border: 1px solid #4d5e76;
        border-radius: 3px;
        background: linear-gradient(135deg, #d4dfef, #a9bedc 60%, #b8cbe4);
        box-shadow: inset 0 0 0 1px #d5e1f0;
    }
    .stacked {
        width: 54px;
        margin-right: 6px;
        background: linear-gradient(135deg, #eef3f8, #c9d7e8);
        box-shadow: inset 0 0 0 1px #fff, 3px 0 0 -1px #c9d7e8, 4px 0 0 -1px #4d5e76;
    }
    .program {
        width: 34px;
        height: 34px;
    }
    .program text {
        font-size: 8px;
    }
    .tray {
        display: flex;
        align-items: center;
        gap: 6px;
        margin-left: auto;
        color: #fff;
    }
    .tray svg {
        width: 18px;
        height: 18px;
    }
    .lang {
        margin-right: 11px;
    }
    .light {
        margin-right: 6px;
    }
    .arrow.light {
        border-width: 0 4px 4px;
        border-bottom-color: #fff;
    }
    time {
        margin: 2px 4px 0 8px;
        text-align: center;
        line-height: 17px;
    }
    .show-desktop {
        width: 14px;
        height: 40px;
        border: 1px solid #40536a;
        background: linear-gradient(135deg, #8c9fb5, #4d5f76);
    }
</style>
